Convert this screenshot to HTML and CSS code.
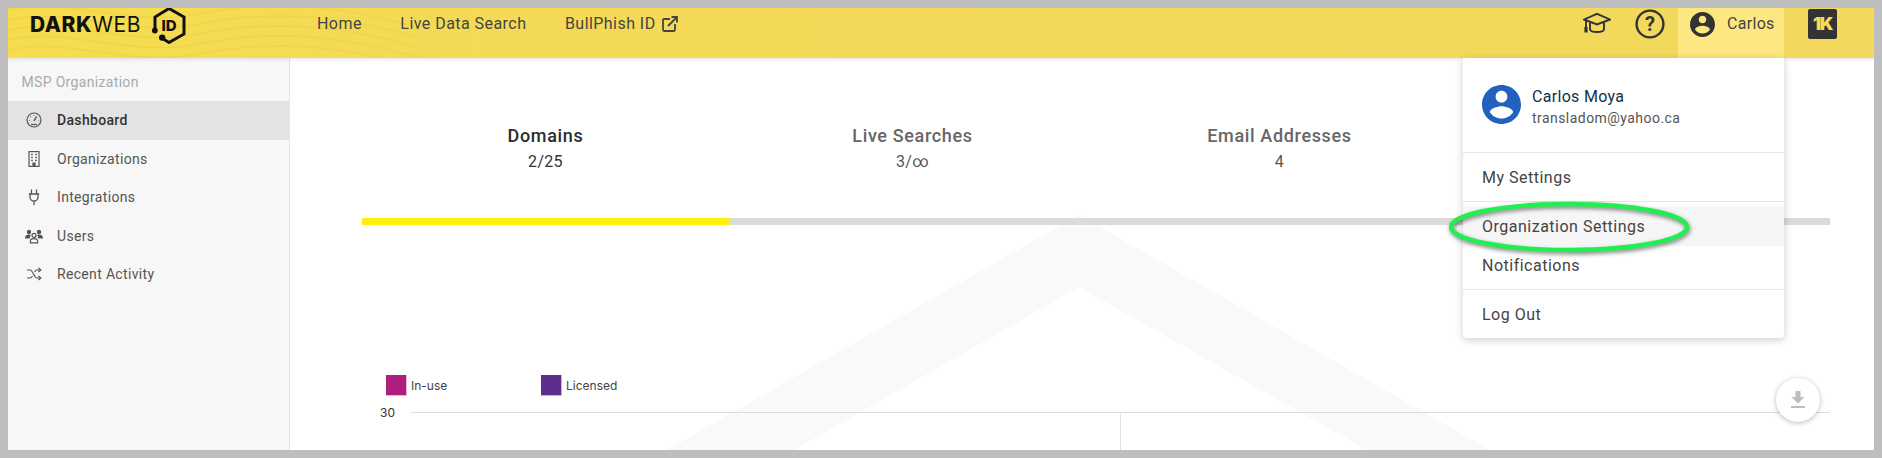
FILE: index.html
```html
<!DOCTYPE html>
<html lang="en">
<head>
    <meta charset="UTF-8">
    <title>Dark Web ID - Dashboard</title>
    <link rel="stylesheet" href="styles.css">
</head>
<body>
    <div class="app">
        <header class="topbar">
            <svg class="waves" viewBox="0 0 412 50" fill="none">
                <path d="M0 12C60 -2 120 30 190 16S330 6 412 30"/>
                <path d="M0 22C60 8 120 40 190 26S330 16 412 40"/>
                <path d="M0 32C60 18 120 50 190 36S330 26 412 50"/>
                <path d="M0 42C60 28 120 60 190 46S330 36 412 60"/>
                <path d="M0 2C60 -12 120 20 190 6S330 -4 412 20"/>
            </svg>
            <div class="logo">
                <span class="logo-text"><b>DARK</b>WEB</span>
                <svg class="logo-mark" viewBox="152 8 34 36" fill="none">
                    <path d="M155 30V17L169 8.5L184 17V34L169 42.5L162.5 38.5" stroke="#111" stroke-width="3"/>
                    <circle cx="154.8" cy="30.5" r="2.9" fill="#111"/>
                    <circle cx="162.2" cy="37.6" r="3.2" fill="#111"/>
                    <text x="169" y="31" text-anchor="middle" class="logo-id">ID</text>
                </svg>
            </div>
            <nav class="nav">
                <a>Home</a>
                <a>Live Data Search</a>
                <a>BullPhish ID
                    <svg class="nav-ext" viewBox="0 0 16 16" fill="none" stroke="#444" stroke-width="1.8">
                        <path d="M8 3H2.2C1.5 3 1 3.5 1 4.2V13.8C1 14.5 1.5 15 2.2 15H11.8C12.5 15 13 14.5 13 13.8V8"/>
                        <path d="M6 10L15 1M9.5 1H15V6.5"/>
                    </svg>
                </a>
            </nav>
            <div class="top-right">
                <svg class="cap" viewBox="0 0 28 20" fill="none" stroke="#333" stroke-width="1.9">
                    <path d="M14 .8L27 6.5L14 11.5L1 6.5Z"/>
                    <path d="M7 9.5V16C7 18.5 10 19 14 19S21 18.5 21 16V9.5"/>
                    <path d="M3 7.5V15"/>
                    <path d="M3 14V19.5" stroke-width="3.2"/>
                </svg>
                <svg class="help" viewBox="0 0 30 30" fill="none">
                    <circle cx="15" cy="15" r="13.4" stroke="#333" stroke-width="2.4"/>
                    <text x="15" y="21.5" text-anchor="middle" class="help-mark">?</text>
                </svg>
                <div class="user-tab">
                    <svg class="user-icon" viewBox="2 2 20 20">
                        <path fill="#333" d="M12 2C6.48 2 2 6.48 2 12s4.48 10 10 10 10-4.48 10-10S17.52 2 12 2zm0 3c1.66 0 3 1.34 3 3s-1.34 3-3 3-3-1.34-3-3 1.34-3 3-3zm0 14.2c-2.5 0-4.71-1.28-6-3.22.03-1.99 4-3.08 6-3.08 1.99 0 5.97 1.09 6 3.08-1.29 1.94-3.5 3.22-6 3.22z"/>
                    </svg>
                    <span>Carlos</span>
                </div>
                <div class="k-logo">1K</div>
            </div>
        </header>

        <div class="layout">
            <aside class="sidebar">
                <div class="side-label">MSP Organization</div>
                <a class="side-item active">
                    <svg class="side-icon" viewBox="0 0 18 18" fill="none" stroke="#555" stroke-width="1.2">
                        <circle cx="9" cy="9" r="7"/>
                        <path d="M9 10L11.5 5.5" stroke-width="1.5"/>
                        <path d="M5 9.5H4.4M6 6L5.5 5.5M9 4.6V4M13.5 9.5H13"/>
                        <path d="M6 13.5H12"/>
                    </svg>
                    Dashboard
                </a>
                <a class="side-item">
                    <svg class="side-icon" viewBox="0 0 18 18" fill="none" stroke="#555" stroke-width="1.2">
                        <rect x="4" y="1.6" width="10" height="14.8"/>
                        <path d="M6.2 4.5H7.8M10.2 4.5H11.8M6.2 7.5H7.8M10.2 7.5H11.8M6.2 10.5H7.8M10.2 10.5H11.8" stroke-width="1.6"/>
                        <path d="M8 16V13H10V16" fill="#555"/>
                    </svg>
                    Organizations
                </a>
                <a class="side-item">
                    <svg class="side-icon" viewBox="0 0 18 18" fill="none" stroke="#555" stroke-width="1.3">
                        <path d="M6.5 1.5V6M11.5 1.5V6M3.8 6H14.2M5 6V9C5 11.5 7 13 9 13S13 11.5 13 9V6M9 13V17"/>
                    </svg>
                    Integrations
                </a>
                <a class="side-item">
                    <svg class="side-icon" viewBox="0 0 18 18" fill="#555">
                        <circle cx="4" cy="5" r="2.2"/>
                        <circle cx="14" cy="5" r="2.2"/>
                        <path d="M0 11.4C0 8.5 2 7.6 4 7.6C4.8 7.6 5.5 7.8 6 8C5.2 8.8 4.8 10 4.8 11.4Z"/>
                        <path d="M18 11.4C18 8.5 16 7.6 14 7.6C13.2 7.6 12.5 7.8 12 8C12.8 8.8 13.2 10 13.2 11.4Z"/>
                        <circle cx="9" cy="8.4" r="2" fill="none" stroke="#555" stroke-width="1.2"/>
                        <path d="M5.4 15.8V14C5.4 12.4 7 11.6 9 11.6S12.6 12.4 12.6 14V15.8Z" fill="none" stroke="#555" stroke-width="1.2"/>
                    </svg>
                    Users
                </a>
                <a class="side-item">
                    <svg class="side-icon" viewBox="0 0 18 18" fill="none" stroke="#555" stroke-width="1.2">
                        <path d="M2 5H5C8 5 9 13 12 13H15.5M2 13H5C6 13 6.8 12 7.5 11M9.6 7C10.2 6 11 5 12 5H15.5"/>
                        <path d="M13.5 3L15.8 5L13.5 7M13.5 11L15.8 13L13.5 15"/>
                    </svg>
                    Recent Activity
                </a>
            </aside>

            <main class="main">
                <svg class="watermark" viewBox="0 0 1584 392">
                    <polygon points="789,157 1200,392 1077,392 789,229 504,392 377,392"/>
                </svg>
                <div class="stats">
                    <div class="stat active">
                        <div class="stat-title">Domains</div>
                        <div class="stat-value">2/25</div>
                    </div>
                    <div class="stat">
                        <div class="stat-title">Live Searches</div>
                        <div class="stat-value">3/∞</div>
                    </div>
                    <div class="stat">
                        <div class="stat-title">Email Addresses</div>
                        <div class="stat-value">4</div>
                    </div>
                    <div class="stat"></div>
                </div>
                <div class="progress"><div class="progress-fill"></div></div>

                <div class="legend">
                    <div class="legend-item"><span class="swatch swatch-use"></span>In-use</div>
                    <div class="legend-item"><span class="swatch swatch-lic"></span>Licensed</div>
                </div>
                <div class="chart">
                    <span class="chart-tick">30</span>
                    <div class="plot"><div class="plot-half"></div></div>
                </div>
                <button class="download">
                    <svg viewBox="0 0 14 18" fill="#bdbdbd">
                        <path d="M4.5 0H9.5V6H13.5L7 12.5L.5 6H4.5Z"/>
                        <rect x="0" y="15" width="14" height="2"/>
                    </svg>
                </button>
            </main>
        </div>

        <div class="user-menu">
            <div class="menu-head">
                <svg class="avatar" viewBox="2 2 20 20">
                    <circle cx="12" cy="12" r="9" fill="#fff"/>
                    <path fill="#2361bf" d="M12 2C6.48 2 2 6.48 2 12s4.48 10 10 10 10-4.48 10-10S17.52 2 12 2zm0 3c1.66 0 3 1.34 3 3s-1.34 3-3 3-3-1.34-3-3 1.34-3 3-3zm0 14.2c-2.5 0-4.71-1.28-6-3.22.03-1.99 4-3.08 6-3.08 1.99 0 5.97 1.09 6 3.08-1.29 1.94-3.5 3.22-6 3.22z"/>
                </svg>
                <div class="menu-user">
                    <div class="menu-name">Carlos Moya</div>
                    <div class="menu-email">transladom@yahoo.ca</div>
                </div>
            </div>
            <div class="menu-group single"><a class="menu-item">My Settings</a></div>
            <div class="menu-group">
                <a class="menu-item hover">Organization Settings</a>
                <a class="menu-item">Notifications</a>
            </div>
            <div class="menu-group single last"><a class="menu-item">Log Out</a></div>
        </div>

        <svg class="callout" viewBox="0 0 260 64" fill="none">
            <ellipse cx="130" cy="32" rx="118" ry="23" stroke="#1ff04f" stroke-width="4.4"/>
        </svg>
    </div>
</body>
</html>
```

FILE: styles.css
```css
* {
    box-sizing: border-box;
}
body {
    margin: 0;
    padding: 8px;
    height: 458px;
    overflow: hidden;
    background-color: #bebebe;
    font-family: Roboto, "Liberation Sans", sans-serif;
    color: #444;
}
.app {
    position: relative;
    display: flex;
    flex-direction: column;
    height: 442px;
    overflow: hidden;
    background-color: #fff;
}

/* top bar */
.topbar {
    position: relative;
    z-index: 2;
    display: flex;
    align-items: flex-start;
    flex: 0 0 50px;
    padding-left: 22px;
    background: linear-gradient(90deg, #f6dd4e 0%, #f4da55 25%, #f2d85d 100%);
    box-shadow: 0 1px 4px rgba(0, 0, 0, 0.12);
}
.waves {
    position: absolute;
    left: 0;
    top: 0;
    width: 412px;
    height: 50px;
}
.waves path {
    stroke: #e8cd4c;
    stroke-width: 1.5;
    opacity: 0.45;
}
.logo {
    position: relative;
    display: flex;
    align-items: flex-start;
    width: 287px;
}
.logo-text {
    width: 122px;
    font-family: Inter, sans-serif;
    font-size: 21px;
    line-height: 33px;
    letter-spacing: 0.6px;
    color: #111;
}
.logo-text b {
    font-weight: 800;
}
.logo-mark {
    width: 34px;
    height: 36px;
}
.logo-id {
    font-family: Inter, sans-serif;
    font-size: 15px;
    font-weight: 800;
    fill: #111;
}
.nav {
    position: relative;
    display: flex;
    gap: 38.5px;
    font-size: 16px;
    line-height: 32px;
    letter-spacing: 0.45px;
}
.nav a {
    display: flex;
    align-items: center;
    gap: 6px;
    color: #444;
}
.nav-ext {
    width: 16px;
    height: 16px;
}
.top-right {
    display: flex;
    align-items: flex-start;
    margin-left: auto;
    padding-right: 37px;
}
.cap {
    width: 28px;
    height: 20px;
    margin: 5px 24px 0 0;
}
.help {
    width: 30px;
    height: 30px;
    margin: 1px 13px 0 0;
}
.help-mark {
    font-family: Roboto, sans-serif;
    font-size: 20px;
    font-weight: 700;
    fill: #333;
}
.user-tab {
    display: flex;
    align-items: flex-start;
    gap: 12px;
    width: 106px;
    height: 50px;
    padding: 4px 0 0 12px;
    background-color: #fde780;
    font-size: 16px;
    line-height: 24px;
    letter-spacing: 0.3px;
}
.user-icon {
    width: 25px;
    height: 25px;
}
.k-logo {
    width: 29px;
    height: 30px;
    margin: 1px 0 0 24px;
    border-radius: 2px;
    background-color: #333;
    color: #f5dc55;
    font-family: Inter, sans-serif;
    font-size: 18px;
    font-weight: 900;
    line-height: 30px;
    letter-spacing: -1.5px;
    text-align: center;
}

/* sidebar */
.layout {
    display: flex;
    flex: 1;
    min-height: 0;
}
.sidebar {
    flex: 0 0 282px;
    border-right: 1px solid #e6e6e6;
    background-color: #f7f7f7;
    font-size: 14px;
    letter-spacing: 0.33px;
}
.side-label {
    height: 43px;
    padding: 14px 0 0 13.5px;
    color: #aaa;
    line-height: 20px;
}
.side-item {
    display: flex;
    align-items: center;
    gap: 14px;
    height: 38.5px;
    padding-left: 17px;
    color: #555;
}
.side-item.active {
    background-color: #e3e3e3;
    color: #333;
    font-weight: 500;
}
.side-icon {
    flex: 0 0 18px;
    width: 18px;
    height: 18px;
}

/* main area */
.main {
    position: relative;
    flex: 1;
    padding: 66px 44px 0 72px;
}
.watermark {
    position: absolute;
    left: 0;
    top: 0;
    width: 1584px;
    height: 392px;
}
.watermark polygon {
    fill: #f9f9f9;
}
.stats {
    position: relative;
    display: grid;
    grid-template-columns: repeat(4, 1fr);
    height: 94px;
    text-align: center;
}
.stat-title {
    font-size: 18px;
    font-weight: 500;
    line-height: 24px;
    letter-spacing: 0.65px;
    color: #666;
}
.stat.active .stat-title {
    color: #2b2b2b;
}
.stat-value {
    margin-top: 3px;
    font-size: 16px;
    line-height: 22px;
    letter-spacing: 0.3px;
    color: #555;
}
.stat.active .stat-value {
    color: #333;
}
.progress {
    position: relative;
    height: 7px;
    background-color: #dbdbdb;
}
.progress-fill {
    width: 25%;
    height: 100%;
    background-color: #fff10a;
}
.legend {
    position: relative;
    display: flex;
    margin: 150px 0 0 24px;
    font-family: Inter, sans-serif;
    font-size: 12px;
    color: #444;
}
.legend-item {
    display: flex;
    align-items: center;
    gap: 4px;
    width: 155px;
}
.swatch {
    width: 21px;
    height: 21px;
    border: 1px solid #e3b5d5;
    border-width: 0 1px 1px 0;
}
.swatch-use {
    background-color: #ae1f80;
}
.swatch-lic {
    background-color: #5f2d8b;
    border-color: #c5b2d8;
}
.chart {
    position: relative;
    display: flex;
    margin: 16px 0 0 18px;
    font-family: Inter, sans-serif;
    font-size: 12px;
    color: #333;
}
.chart-tick {
    width: 31px;
    line-height: 16px;
    margin-top: -7px;
}
.plot {
    flex: 1;
    height: 60px;
    border-top: 1px solid #dcdcdc;
}
.plot-half {
    width: 50%;
    height: 100%;
    border-right: 1px solid #e2e2e2;
}
.download {
    position: absolute;
    right: 54px;
    top: 320px;
    width: 44px;
    height: 44px;
    padding: 0;
    border: none;
    border-radius: 50%;
    background-color: #fff;
    box-shadow: 0 1px 5px rgba(0, 0, 0, 0.28);
}
.download svg {
    display: block;
    width: 14px;
    height: 18px;
    margin: 0 auto;
}

/* user dropdown */
.user-menu {
    position: absolute;
    z-index: 3;
    top: 50px;
    right: 90px;
    width: 321px;
    height: 280px;
    border-radius: 0 0 4px 4px;
    background-color: #fff;
    box-shadow: 0 2px 8px rgba(0, 0, 0, 0.2);
}
.menu-head {
    display: flex;
    align-items: center;
    gap: 11px;
    height: 95px;
    padding: 0 0 1px 19px;
    border-bottom: 1px solid #e6e6e6;
}
.avatar {
    width: 39px;
    height: 39px;
}
.menu-user {
    padding-top: 4px;
}
.menu-name {
    font-size: 16px;
    line-height: 22px;
    letter-spacing: 0.3px;
    color: #12304a;
}
.menu-email {
    font-size: 14px;
    line-height: 20px;
    letter-spacing: 0.45px;
    color: #555;
}
.menu-group {
    padding: 5px 0 4px;
    border-bottom: 1px solid #e6e6e6;
}
.menu-group.single {
    padding: 0;
}
.menu-group.last {
    border-bottom: none;
}
.menu-item {
    display: flex;
    align-items: center;
    height: 39px;
    padding-left: 19px;
    font-size: 16px;
    letter-spacing: 0.5px;
    color: #444;
}
.menu-group.single .menu-item {
    height: 48px;
}
.menu-item.hover {
    background-color: #f6f6f6;
}

/* green annotation drawn over the screenshot */
.callout {
    position: absolute;
    z-index: 4;
    left: 1431px;
    top: 187px;
    width: 260px;
    height: 64px;
    filter: drop-shadow(1px 2px 2px rgba(0, 0, 0, 0.5));
}
```
